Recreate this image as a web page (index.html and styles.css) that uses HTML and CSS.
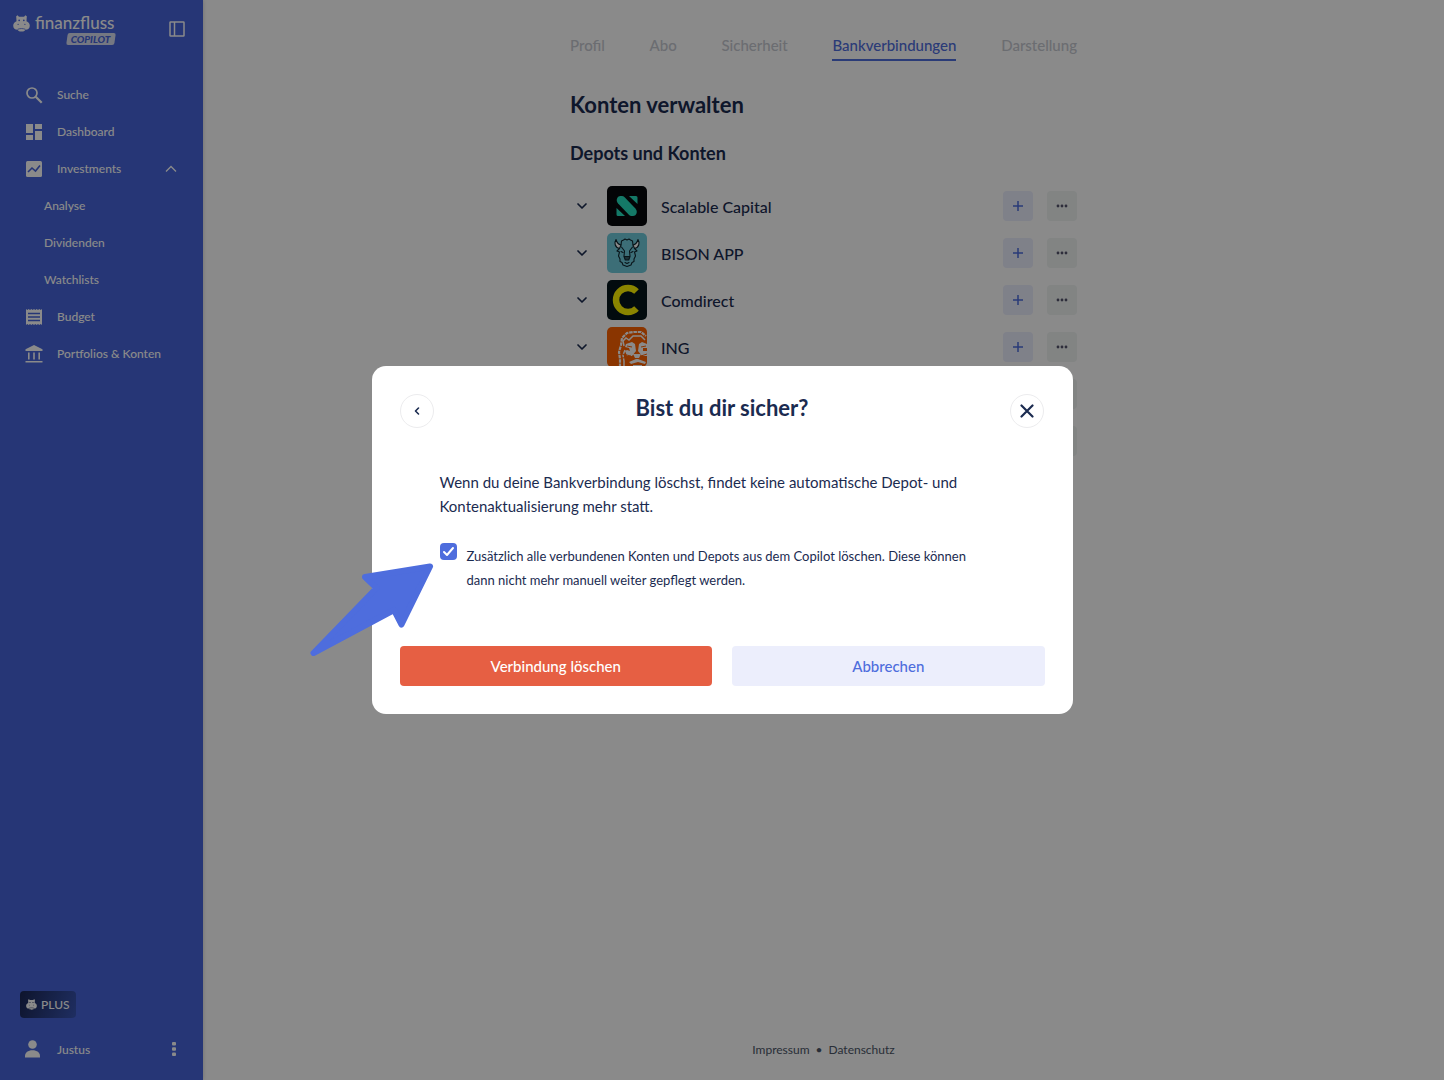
FILE: index.html
```html
<!DOCTYPE html>
<html lang="de">
<head>
<meta charset="utf-8">
<meta name="viewport" content="width=device-width, initial-scale=1">
<title>Konten verwalten</title>
<link rel="stylesheet" href="styles.css">
</head>
<body>
<svg width="0" height="0" class="defs" aria-hidden="true">
  <symbol id="hippo" viewBox="0 0 16 16">
    <path fill="currentColor" d="M3 1.200 4.300.3 5.600 1.600h4.800L11.700.3 13 1.200l-.3 4.600c1.900.6 3.100 2.200 3.100 4.200 0 2.400-1.700 3.800-4 3.800-.7 1.200-2 1.700-3.800 1.700s-3.100-.5-3.800-1.700c-2.300 0-4-1.400-4-3.800 0-2 1.200-3.600 3.100-4.200z"/>
    <g fill="var(--hippo-eye)"><circle cx="5.800" cy="5" r=".8"/><circle cx="10.200" cy="5" r=".8"/><circle cx="4.800" cy="8.800" r=".6"/><circle cx="11.200" cy="8.800" r=".6"/></g>
    <path d="M4.300 13.500c2.400-1 5-1 7.400 0" fill="none" stroke="var(--hippo-eye)" stroke-width=".7"/>
  </symbol>
  <symbol id="chevron" viewBox="0 0 12 12"><path d="m2 4 4 4 4-4" fill="none" stroke="currentColor" stroke-width="1.700" stroke-linecap="round" stroke-linejoin="round"/></symbol>
  <symbol id="plus" viewBox="0 0 12 12"><path d="M6 1v10M1 6h10" stroke="currentColor" stroke-width="1.500" fill="none"/></symbol>
  <symbol id="dots" viewBox="0 0 12 12"><g fill="currentColor"><circle cx="2" cy="6" r="1.400"/><circle cx="6" cy="6" r="1.400"/><circle cx="10" cy="6" r="1.400"/></g></symbol>
</svg>

<div class="app">
  <aside class="sidebar">
    <header class="sidebar-head">
      <a href="#" class="logo">
        <svg class="logo-mark"><use href="#hippo"/></svg>
        <span class="logo-name">finanzfluss</span>
        <span class="logo-tag">COPILOT</span>
      </a>
      <button class="plain" aria-label="Seitenleiste einklappen">
        <svg width="18" height="18" viewBox="0 0 18 18" fill="none" stroke="currentColor" stroke-width="1.500"><rect x="2" y="2" width="14" height="14" rx=".6"/><path d="M6.500 2v14"/></svg>
      </button>
    </header>
    <nav class="menu">
      <a href="#"><svg viewBox="0 0 18 18"><circle cx="7" cy="7" r="5" fill="none" stroke="currentColor" stroke-width="1.700"/><path d="m10.700 10.700 6 6" stroke="currentColor" stroke-width="2.200"/></svg>Suche</a>
      <a href="#"><svg viewBox="0 0 18 18" fill="currentColor"><path d="M1 1h7v9H1zM1 12h7v5H1zM10 1h7v5h-7zM10 8h7v9h-7z"/></svg>Dashboard</a>
      <a href="#"><svg viewBox="0 0 18 18"><rect x="1" y="1" width="16" height="16" rx="1.500" fill="currentColor"/><path d="m3 12 4-4 3.500 3L15 5.500" fill="none" stroke="#4664da" stroke-width="1.600"/></svg>Investments
        <svg class="caret" viewBox="0 0 12 12"><path d="m1 8.500 5-5 5 5" fill="none" stroke="currentColor" stroke-width="1.300"/></svg></a>
      <a href="#" class="sub">Analyse</a>
      <a href="#" class="sub">Dividenden</a>
      <a href="#" class="sub">Watchlists</a>
      <a href="#"><svg viewBox="0 0 18 18"><path fill="currentColor" d="m1 1 1.300 1L3.700 1 5 2l1.300-1 1.400 1L9 1l1.300 1 1.400-1L13 2l1.300-1 1.400 1L17 1v16l-1.300-1-1.400 1-1.300-1-1.300 1-1.400-1L9 17l-1.300-1-1.400 1L5 16l-1.300 1-1.400-1L1 17z"/><path d="M3 5.500h12M3 9h12M3 12.500h12" stroke="#4664da" stroke-width="1.300"/></svg>Budget</a>
      <a href="#"><svg viewBox="0 0 18 18" fill="currentColor"><path d="M9 0 .5 4.300V6h17V4.300zM3 7.500h1.600v7H3zM8.200 7.500h1.600v7H8.200zM13.400 7.500H15v7h-1.600zM.5 16h17v1.500H.5z"/></svg>Portfolios &amp; Konten</a>
    </nav>
    <div class="account">
      <span class="plus-badge"><svg><use href="#hippo"/></svg>PLUS</span>
      <div class="user">
        <svg viewBox="0 0 18 18" fill="currentColor"><circle cx="8.500" cy="4.500" r="4.300"/><path d="M1 17.500v-1.300C1 12.500 4 10.300 8.500 10.300s7.500 2.200 7.500 5.900v1.300z"/></svg>
        <span>Justus</span>
        <button class="plain" aria-label="Kontomenü"><svg viewBox="0 0 18 18" fill="currentColor"><rect x="7" y="2" width="4" height="3.500" rx="1"/><rect x="7" y="7.300" width="4" height="3.500" rx="1"/><rect x="7" y="12.600" width="4" height="3.500" rx="1"/></svg></button>
      </div>
    </div>
  </aside>

  <main class="content">
    <nav class="tabs">
      <a href="#">Profil</a><a href="#">Abo</a><a href="#">Sicherheit</a><a href="#" class="active" aria-current="page">Bankverbindungen</a><a href="#">Darstellung</a>
    </nav>
    <h1>Konten verwalten</h1>
    <h2>Depots und Konten</h2>
    <ul class="banks">
      <li>
        <button class="plain expand" aria-label="Aufklappen"><svg><use href="#chevron"/></svg></button>
        <svg class="bank-logo" viewBox="0 0 40 40"><rect width="40" height="40" fill="#07090c"/><g fill="#25e0bf"><path d="M13.500 10H15c1 0 1.700.4 2.400 1.100l11 11.400c2.600 2.800 1.300 7.500-2.400 7.500h-1.500c-1 0-1.700-.4-2.400-1.100l-11-11.400C8.500 14.700 9.800 10 13.500 10z"/><path d="M22 10h7q1.500 0 1.500 1.500V18zM9.500 22v6.500q0 1.500 1.500 1.500h7z"/></g></svg>
        <span class="bank-name">Scalable Capital</span>
        <button class="tile add" aria-label="Hinzufügen"><svg><use href="#plus"/></svg></button>
        <button class="tile more" aria-label="Mehr"><svg><use href="#dots"/></svg></button>
      </li>
      <li>
        <button class="plain expand" aria-label="Aufklappen"><svg><use href="#chevron"/></svg></button>
        <svg class="bank-logo" viewBox="0 0 40 40"><rect width="40" height="40" fill="#70cbdc"/><g fill="none" stroke="#10252e" stroke-width="1.100" stroke-linejoin="round" stroke-linecap="round"><path fill="#fff" d="M9 6.500c-2 3-1.300 8 3.500 9l1.500-3.500c-3-.5-4.200-2.500-5-5.500zM31 6.500c2 3 1.300 8-3.500 9L26 12c3-.5 4.200-2.500 5-5.500z"/><path d="m14 12 .5-4 2-1 1.500-1 2 1 2-1 1.500 1 2 1 .5 4M12.500 15.500 10 18l2.500 1-1 4 1.500 3v2.500l2 1 1 2.500 4 1.500 4-1.500 1-2.500 2-1V26l1.500-3-1-4 2.500-1-2.500-2.500M14.500 14l3 4-.5 5M25.500 14l-3 4 .5 5M14 18.500l2 1M26 18.500l-2 1M18 29.500l2 1 2-1"/><path fill="#355c66" d="M17 23.500h6l-1.300 3.500h-3.400z"/></g></svg>
        <span class="bank-name">BISON APP</span>
        <button class="tile add" aria-label="Hinzufügen"><svg><use href="#plus"/></svg></button>
        <button class="tile more" aria-label="Mehr"><svg><use href="#dots"/></svg></button>
      </li>
      <li>
        <button class="plain expand" aria-label="Aufklappen"><svg><use href="#chevron"/></svg></button>
        <svg class="bank-logo" viewBox="0 0 40 40"><rect width="40" height="40" fill="#04161b"/><path d="M29.500 11.500A12 12 0 1 0 29.500 28.500" fill="none" stroke="#fff500" stroke-width="6.500"/></svg>
        <span class="bank-name">Comdirect</span>
        <button class="tile add" aria-label="Hinzufügen"><svg><use href="#plus"/></svg></button>
        <button class="tile more" aria-label="Mehr"><svg><use href="#dots"/></svg></button>
      </li>
      <li>
        <button class="plain expand" aria-label="Aufklappen"><svg><use href="#chevron"/></svg></button>
        <svg class="bank-logo" viewBox="0 0 40 40"><rect width="40" height="40" fill="#ff6200"/><path fill="none" stroke="#fff" stroke-width="2.200" stroke-dasharray="3.500 .8" d="M13 40v-8l-1-7 2-7 1-7 5-5 7-1 7 0 5 4"/><path fill="none" stroke="#fff" stroke-width="1.500" d="M17 40v-6l-1-6 2-5M17 19l-1-5 3-3 3 2 4-4h8l4 4"/><g fill="#fff"><path d="m19 17 6-2 3 2 1 7-4 5h-5l-2-5 2-1 3 1-1-3-4-1zM40 17l-5-2-3 2-1 7 4 5h5v-5l-4 0 0-3h4zM26 27h8l-2 4h-4z"/><path d="m22 35 7-3h2l8 3-1 2-7-2-7 2zM26 38h9v2h-9z"/></g><path fill="none" stroke="#ff6200" stroke-width="1" d="m15 27 9 2M15 31l9-1M20 19l5 1M34 20l5-1M34 29l6-2"/></svg>
        <span class="bank-name">ING</span>
        <button class="tile add" aria-label="Hinzufügen"><svg><use href="#plus"/></svg></button>
        <button class="tile more" aria-label="Mehr"><svg><use href="#dots"/></svg></button>
      </li>
      <li>
        <button class="tile add" aria-label="Hinzufügen"><svg><use href="#plus"/></svg></button>
        <button class="tile more" aria-label="Mehr"><svg><use href="#dots"/></svg></button>
      </li>
      <li>
        <button class="tile add" aria-label="Hinzufügen"><svg><use href="#plus"/></svg></button>
        <button class="tile more" aria-label="Mehr"><svg><use href="#dots"/></svg></button>
      </li>
    </ul>
    <footer class="legal"><a href="#">Impressum</a><span>•</span><a href="#">Datenschutz</a></footer>
  </main>
</div>

<div class="backdrop">
  <section class="modal" role="dialog" aria-modal="true" aria-labelledby="modal-title">
    <header class="modal-head">
      <button class="round" aria-label="Zurück"><svg width="12" height="12" viewBox="0 0 12 12"><path d="M7.500 3 4.500 6l3 3" fill="none" stroke="currentColor" stroke-width="1.600" stroke-linecap="round" stroke-linejoin="round"/></svg></button>
      <h2 id="modal-title">Bist du dir sicher?</h2>
      <button class="round" aria-label="Schließen"><svg width="14" height="14" viewBox="0 0 14 14"><path d="m1.500 1.500 11 11M12.500 1.500l-11 11" stroke="currentColor" stroke-width="2.200" stroke-linecap="round"/></svg></button>
    </header>
    <div class="modal-body">
      <p>Wenn du deine Bankverbindung löschst, findet keine automatische Depot- und Kontenaktualisierung mehr statt.</p>
      <div class="option">
        <input type="checkbox" id="delete-all" checked>
        <label for="delete-all">Zusätzlich alle verbundenen Konten und Depots aus dem Copilot löschen. Diese können dann nicht mehr manuell weiter gepflegt werden.</label>
      </div>
    </div>
    <div class="modal-actions">
      <button class="danger">Verbindung löschen</button>
      <button class="cancel">Abbrechen</button>
    </div>
    <svg class="pointer" viewBox="0 0 124 96" aria-hidden="true"><path d="M120 4.500 55 15l11.500 11L3.500 91 84 48l7.500 14.500z" fill="#4e6ddd" stroke="#4e6ddd" stroke-width="6" stroke-linejoin="round"/></svg>
  </section>
</div>
</body>
</html>
```

FILE: styles.css
```css
:root {
  --blue: #4e6ddd;
  --sidebar: #4664da;
  --navy: #1b2b50;
}

* { box-sizing: border-box; }

body {
  margin: 0;
  font-family: Lato, "Noto Sans", sans-serif;
  font-size: 16px;
  color: var(--navy);
  background: #fff;
}

a { color: inherit; text-decoration: none; }
h1, h2, p, ul { margin: 0; padding: 0; }
button { font: inherit; color: inherit; border: 0; padding: 0; cursor: pointer; }
svg { display: block; flex: none; }
.defs { position: absolute; }

.plain { display: grid; place-items: center; background: none; }

.app { display: flex; min-height: 100vh; }

/* Sidebar */
.sidebar {
  display: flex;
  flex-direction: column;
  width: 203px;
  flex: none;
  color: #fff;
  background: var(--sidebar);
  font-size: 12px;
  font-weight: 500;
  box-shadow: 0 0 4px rgba(0, 0, 0, .2);
}

.sidebar-head {
  display: flex;
  justify-content: space-between;
  align-items: center;
  padding: 13px 17px 13px 13px;
}

.logo {
  --hippo-eye: var(--sidebar);
  display: grid;
  grid-template-columns: 17px auto;
  column-gap: 5px;
  align-items: center;
}
.logo-mark { width: 17px; height: 17px; }
.logo-name { font-size: 17px; line-height: 20px; }
.logo-tag {
  position: relative;
  grid-column: 2;
  justify-self: end;
  padding: 0 4px;
  font-size: 10px;
  line-height: 12px;
  font-weight: 900;
  font-style: italic;
  color: var(--sidebar);
  z-index: 0;
}
.logo-tag::before {
  content: "";
  position: absolute;
  inset: 0;
  z-index: -1;
  border-radius: 2px;
  background: #d9def0;
  transform: skewX(-8deg);
}

.menu { padding: 18px 26px 18px 25px; }
.menu a {
  display: flex;
  align-items: center;
  gap: 14px;
  height: 37px;
}
.menu svg { width: 18px; height: 18px; }
.menu .caret { width: 12px; height: 12px; margin-left: auto; }
.menu .sub { padding-left: 19px; }

.account { margin-top: auto; padding: 0 20px 18px; }
.plus-badge {
  --hippo-eye: #1d2a5c;
  display: flex;
  align-items: center;
  gap: 4px;
  width: fit-content;
  height: 27px;
  padding: 0 6px;
  border-radius: 4px;
  background: linear-gradient(110deg, #1a2653, #3a56b4);
}
.plus-badge svg { width: 11px; height: 11px; }
.user { display: flex; align-items: center; padding: 22px 0 4px 4px; }
.user svg { width: 18px; height: 18px; }
.user span { margin-left: 15px; }
.user button { margin-left: auto; }

/* Page */
.content {
  flex: 1;
  display: flex;
  flex-direction: column;
  width: 100%;
  max-width: 507px;
  margin: 0 auto;
}

.tabs {
  display: flex;
  justify-content: space-between;
  padding-top: 35px;
  font-size: 15px;
  line-height: 20px;
  font-weight: 500;
  color: #c6c9d1;
}
.tabs a { padding-bottom: 4px; border-bottom: 2px solid transparent; }
.tabs .active { color: var(--blue); border-color: var(--blue); }

h1, h2 { font-weight: 700; }
h1 { margin-top: 29px; font-size: 22px; line-height: 30px; }
.content h2 { margin-top: 20px; font-size: 18px; line-height: 26px; }

.banks { list-style: none; margin-top: 20px; }
.banks li {
  display: flex;
  align-items: center;
  justify-content: flex-end;
  height: 40px;
  margin-bottom: 7px;
}
.expand { width: 24px; height: 24px; }
.expand svg { width: 12px; height: 12px; }
.bank-logo { width: 40px; height: 40px; margin-left: 13px; border-radius: 5px; }
.bank-name { flex: 1; margin-left: 14px; font-weight: 500; }

.tile {
  display: grid;
  place-items: center;
  width: 30px;
  height: 30px;
  border-radius: 4px;
}
.tile svg { width: 12px; height: 12px; }
.tile + .tile { margin-left: 14px; }
.add { color: var(--blue); background: #ebeefd; }
.more { color: #55556e; background: #f0f4f3; }

.legal {
  display: flex;
  justify-content: center;
  gap: 6px;
  margin-top: auto;
  padding-bottom: 22px;
  font-size: 12px;
  line-height: 16px;
  color: #4d5668;
}

/* Confirmation dialog */
.backdrop {
  position: fixed;
  inset: 0;
  display: grid;
  place-items: center;
  background: rgba(0, 0, 0, .46);
}
.modal {
  position: relative;
  width: calc(100% - 40px);
  max-width: 701px;
  padding: 28px;
  border-radius: 14px;
  background: #fff;
}
.modal-head { display: flex; justify-content: space-between; }
.modal-head h2 { font-size: 22px; line-height: 28px; }
.round {
  display: grid;
  place-items: center;
  width: 34px;
  height: 34px;
  border: 1px solid #ececee;
  border-radius: 50%;
  background: #fff;
}
.modal-body { padding: 42px 54px 0 40px; font-size: 15px; line-height: 24px; }
.option {
  display: flex;
  gap: 10px;
  margin-top: 24px;
  font-size: 13px;
}
.option label { margin-top: 2px; }
.option input {
  appearance: none;
  flex: none;
  width: 17px;
  height: 17px;
  margin: 1px 0 0;
  border-radius: 4px;
  background: var(--blue);
}
.option input:checked {
  background: var(--blue) url("data:image/svg+xml,%3Csvg xmlns='http://www.w3.org/2000/svg' viewBox='0 0 17 17'%3E%3Cpath d='M4 9l3 3 6-7' fill='none' stroke='white' stroke-width='2' stroke-linecap='round' stroke-linejoin='round'/%3E%3C/svg%3E");
}
.modal-actions {
  display: grid;
  grid-template-columns: 1fr 1fr;
  gap: 20px;
  margin-top: 54px;
}
.modal-actions button { height: 40px; border-radius: 4px; font-size: 15px; font-weight: 500; }
.danger { color: #fff; background: #e65f43; }
.cancel { color: var(--blue); background: #eceefc; }

.pointer {
  position: absolute;
  left: -62px;
  top: 196px;
  width: 124px;
  height: 96px;
}
```
